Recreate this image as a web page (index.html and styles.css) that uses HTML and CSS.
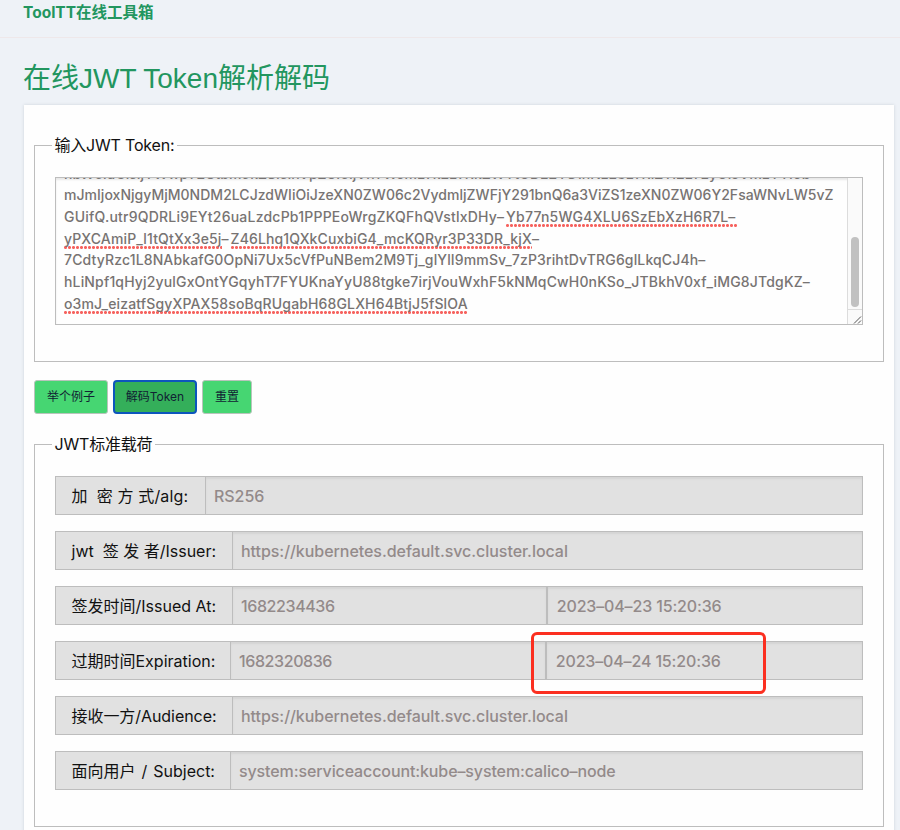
FILE: index.html
```html
<!DOCTYPE html>
<html lang="zh-CN">
<head>
<meta charset="utf-8">
<title>在线JWT Token解析解码</title>
<link rel="stylesheet" href="styles.css">
</head>
<body>
<header class="topbar"><a class="brand">ToolTT在线工具箱</a></header>
<h1 class="title">在线JWT Token解析解码</h1>
<main class="card">
  <section class="group group-input">
    <h2 class="legend">输入JWT Token:</h2>
    <div class="token">
      <div class="token-text">
        <div class="line l0">nbW5ldGlsIjYWwpY2Utbm9kZSIsInVpZCI6IjVhYWJmLTk2LTRkZWYtODE2YS1hNzE3LTRiZTI2LTEyOiJVMzYTI0b</div>
        <div class="line l1">mJmIjoxNjgyMjM0NDM2LCJzdWIiOiJzeXN0ZW06c2VydmljZWFjY291bnQ6a3ViZS1zeXN0ZW06Y2FsaWNvLW5vZ</div>
        <div class="line l2">GUifQ.utr9QDRLi9EYt26uaLzdcPb1PPPEoWrgZKQFhQVstlxDHy<span class="dash">–</span><span class="typo">Yb77n5WG4XLU6SzEbXzH6R7L<span class="dash">–</span></span></div>
        <div class="line l3"><span class="typo">yPXCAmiP_l1tQtXx3e5j</span><span class="dash">–</span><span class="typo">Z46Lhq1QXkCuxbiG4_mcKQRyr3P33DR_kjX</span><span class="dash">–</span></div>
        <div class="line l4">7CdtyRzc1L8NAbkafG0OpNi7Ux5cVfPuNBem2M9Tj_glYlI9mmSv_7zP3rihtDvTRG6glLkqCJ4h<span class="dash">–</span></div>
        <div class="line l5">hLiNpf1qHyj2yulGxOntYGqyhT7FYUKnaYyU88tgke7irjVouWxhF5kNMqCwH0nKSo_JTBkhV0xf_iMG8JTdgKZ<span class="dash">–</span></div>
        <div class="line l6"><span class="typo">o3mJ_eizatfSgyXPAX58soBqRUgabH68GLXH64BtjJ5fSlOA</span></div>
      </div>
      <div class="scroll">
        <div class="track"><div class="thumb"></div></div>
        <svg class="grip" viewBox="0 0 14 14"><path d="M6 13.500 13 6.500M10 13.500l3-3" fill="none" stroke="#555" stroke-width="1"/></svg>
      </div>
    </div>
  </section>
  <div class="actions">
    <button class="btn b1">举个例子</button>
    <button class="btn b2 focused">解码Token</button>
    <button class="btn b3">重置</button>
  </div>
  <section class="group group-claims">
    <h2 class="legend">JWT标准载荷</h2>
    <div class="row k1"><div class="key"><span>加&nbsp; 密 方 式/alg:</span></div><div class="val"><span>RS256</span></div></div>
    <div class="row k2"><div class="key"><span>jwt&nbsp; 签 发 者/Issuer:</span></div><div class="val"><span>https://kubernetes.default.svc.cluster.local</span></div></div>
    <div class="row k3"><div class="key"><span>签发时间/Issued At:</span></div><div class="val num"><span>1682234436</span></div><div class="val date"><span>2023–04–23 15:20:36</span></div></div>
    <div class="row k4"><div class="key"><span>过期时间Expiration:</span></div><div class="val num"><span>1682320836</span></div><div class="val date"><span>2023–04–24 15:20:36</span></div><div class="marker"></div></div>
    <div class="row k5"><div class="key"><span>接收一方/Audience:</span></div><div class="val"><span>https://kubernetes.default.svc.cluster.local</span></div></div>
    <div class="row k6"><div class="key"><span>面向用户 / Subject:</span></div><div class="val"><span>system:serviceaccount:kube–system:calico–node</span></div></div>
  </section>
</main>
</body>
</html>
```
FILE: styles.css
```css
* { box-sizing: border-box; }
body { margin: 0; height: 830px; overflow: hidden; background: #eef2f7; color: #111; font-family: Inter, "Noto Sans CJK SC", sans-serif; }
.topbar { height: 38px; padding: 3px 0 0 23px; border-bottom: 1px solid #eee8ea; }
.brand { display: block; font: 700 15.500px/20px Inter, "Noto Sans CJK SC", sans-serif; color: #22965f; white-space: nowrap; }
.title { margin: 0; height: 67px; padding: 21px 0 0 23px; font-family: "Liberation Sans", "Noto Sans CJK SC", sans-serif; font-size: 28px; line-height: 40px; font-weight: 400; color: #22965f; white-space: nowrap; }
.card { margin: 0 6px 0 24px; height: 740px; padding: 40px 10px 0; background: #fefefe; box-shadow: 0 0 3px #cdd2da; }
.group { border: 1px solid #bdbdbd; padding: 0 20px; }
.group-input { height: 217px; }
.legend { width: max-content; height: 24px; margin: -12px 0 0 -3px; padding: 0 3px 0 2.500px; background: #fefefe; font-size: 16px; line-height: 22px; letter-spacing: -0.200px; font-weight: 400; white-space: nowrap; }
.token { display: flex; height: 148px; margin-top: 19px; border: 1px solid #bdbdbd; overflow: hidden; box-shadow: inset 0 2px 2px #e8e8e8; }
.token-text { flex: 1; min-width: 0; margin-top: -15.500px; padding-left: 8px; font: 500 14px/21.700px Inter, sans-serif; color: #777372; }
.line { height: 21.700px; white-space: nowrap; }
.dash { letter-spacing: 2px; }
.l1 { letter-spacing: 0.025px; }
.l2 { letter-spacing: 0.220px; }
.l3, .l4, .l5, .l6 { letter-spacing: 0.140px; }
.l5 { letter-spacing: 0.160px; }
.typo { background: radial-gradient(circle at 1.500px 1.500px, #f6635f 1.300px, transparent 1.600px) 0 100% / 4px 3px repeat-x; padding-bottom: 2px; }
.scroll { width: 15px; border-left: 1px solid #dcdcdc; background: #fafafa; }
.track { height: 132px; border-bottom: 1px solid #dcdcdc; padding: 59px 3px 0; }
.thumb { width: 8px; height: 70px; border-radius: 4px; background: #c1c1c1; }
.grip { display: block; width: 14px; height: 14px; }
.actions { display: flex; gap: 5px; height: 34px; margin: 18px 0 30px; }
.btn { height: 34px; padding: 0; border: 1px solid #b9c4bc; border-radius: 3px; background: #46d672; color: #123; font: 12px/30px Inter, "Noto Sans CJK SC", sans-serif; white-space: nowrap; }
.b1 { width: 74px; }
.b2 { width: 84px; }
.b3 { width: 50px; }
.focused { background: #34af5a; border: 2px solid #0d56bd; border-radius: 4px; }
.group-claims { height: 383px; }
.group-claims .legend { margin-bottom: 19px; }
.row { position: relative; display: flex; height: 39px; margin-bottom: 16px; border: 1px solid #bdbdbd; background: #e1e1e1; }
.key { flex: none; padding-left: 15.500px; font-size: 16px; line-height: 38px; white-space: nowrap; }
.val { flex: 1; border-left: 1px solid #bdbdbd; padding-left: 8px; font: 500 16px/38px Inter, sans-serif; letter-spacing: -0.050px; color: #938a8a; white-space: nowrap; box-shadow: inset 0 2px 2px #d4d4d4; }
.num { letter-spacing: -0.400px; }
.date { letter-spacing: -0.150px; }
.val + .val { border-left-width: 2px; padding-left: 8.500px; }
.k6 .val { letter-spacing: -0.110px; }
.k1 .key { width: 149px; letter-spacing: 0.120px; }
.k2 .key, .k3 .key, .k5 .key { width: 176px; }
.k4 .key, .k6 .key { width: 174px; }
.k5 .key { letter-spacing: -0.060px; }
.k6 .key { word-spacing: 1.500px; }
.marker { position: absolute; left: 475px; top: -10px; width: 235px; height: 62px; border: 3px solid #fb2f20; border-radius: 6px; }
```
